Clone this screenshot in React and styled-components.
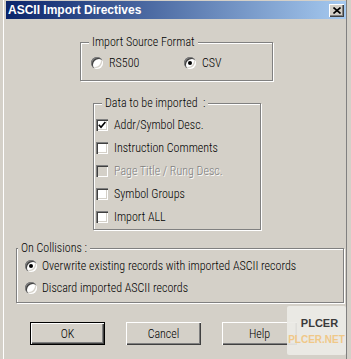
import React from "react";
import styled, { createGlobalStyle } from "styled-components";

const Global = createGlobalStyle`
  html, body { margin: 0; padding: 0; background: #d4d0c8; }
  body { font-family: "Roboto Condensed", "Liberation Sans", sans-serif; font-size: 12px; font-weight: 300; color: #000; }
`;

const Window = styled.div`
  position: relative;
  box-sizing: border-box;
  width: 351px;
  height: 359px;
  padding: 1px 5px 0 6px;
  background: #d4d0c8;
  box-shadow: inset 3px 0 0 #d4d0c8, inset 4px 0 0 #ffffff, inset -4px 0 0 #d4d0c8, inset -5px 0 0 #808080;
  overflow: hidden;
`;

const TitleBar = styled.div`
  display: flex;
  align-items: center;
  justify-content: space-between;
  height: 18px;
  padding: 0 2px 0 2px;
  background: linear-gradient(to right, #0a246a, #a6caf0);
`;

const TitleText = styled.span`
  font-family: "Liberation Sans", Arial, sans-serif;
  font-weight: bold;
  font-size: 12px;
  color: #fff;
  white-space: nowrap;
`;

const CloseButton = styled.div`
  box-sizing: border-box;
  width: 15px;
  height: 13px;
  display: flex;
  align-items: center;
  justify-content: center;
  background: #d4d0c8;
  box-shadow: inset 1px 1px 0 #ffffff, inset -1px -1px 0 #404040, inset -2px -2px 0 #808080;
`;

const Content = styled.div`
  display: flex;
  flex-direction: column;
`;

const Group = styled.fieldset`
  box-sizing: border-box;
  margin: ${p => p.$top}px 0 0 ${p => p.$left}px;
  padding: 0;
  min-width: 0;
  width: ${p => p.$w}px;
  height: ${p => p.$h}px;
  border: 1px solid #808080;
  box-shadow: inset 1px 1px 0 #ffffff, 1px 1px 0 #ffffff;
`;

const Legend = styled.legend`
  margin-left: ${p => p.$m}px;
  padding: 0 3px;
  line-height: 13px;
  height: 13px;
  background: #d4d0c8;
  white-space: nowrap;
`;

const GroupBody = styled.div`
  display: flex;
  flex-direction: ${p => (p.$row ? "row" : "column")};
  padding: ${p => p.$pt}px 0 0 ${p => p.$pl}px;
`;

const Option = styled.div`
  display: flex;
  align-items: center;
  height: ${p => p.$h}px;
  width: ${p => (p.$w ? `${p.$w}px` : "auto")};
  white-space: nowrap;
`;

const Label = styled.span`
  color: ${p => (p.$disabled ? "#808080" : "#000")};
  text-shadow: ${p => (p.$disabled ? "1px 1px 0 #ffffff" : "none")};
`;

const RadioCircle = styled.span`
  position: relative;
  flex: none;
  box-sizing: border-box;
  width: 12px;
  height: 12px;
  margin-right: ${p => p.$gap}px;
  border-radius: 50%;
  background: #fff;
  box-shadow: inset 1px 1px 0 #808080, inset 2px 2px 0 #404040, inset -1px -1px 0 #ffffff, inset -2px -2px 0 #d4d0c8;
  &::after {
    content: "";
    display: ${p => (p.$checked ? "block" : "none")};
    position: absolute;
    left: 4px;
    top: 4px;
    width: 4px;
    height: 4px;
    border-radius: 50%;
    background: #000;
  }
`;

const CheckBox = styled.span`
  flex: none;
  box-sizing: border-box;
  width: 12px;
  height: 12px;
  margin-right: 6px;
  display: flex;
  align-items: center;
  justify-content: center;
  background: ${p => (p.$disabled ? "#d4d0c8" : "#fff")};
  box-shadow: inset 1px 1px 0 #808080, inset 2px 2px 0 #404040, inset -1px -1px 0 #ffffff, inset -2px -2px 0 #d4d0c8;
`;

const ButtonRow = styled.div`
  display: flex;
  gap: 21px;
  margin: 19px 0 0 24px;
`;

const Button = styled.div`
  box-sizing: border-box;
  width: 75px;
  height: 23px;
  display: flex;
  align-items: center;
  justify-content: center;
  background: #d4d0c8;
  border: ${p => (p.$default ? "1px solid #000" : "none")};
  box-shadow: inset 1px 1px 0 #ffffff, inset -1px -1px 0 #404040, inset -2px -2px 0 #808080;
`;

const Watermark = styled.div`
  position: absolute;
  left: 287px;
  top: 306px;
  width: 59px;
  height: 49px;
  background: rgba(236, 234, 230, 0.92);
  border-radius: 2px;
  display: flex;
  flex-direction: column;
  align-items: center;
  justify-content: center;
  gap: 5px;
  font-family: "Liberation Sans", Arial, sans-serif;
  font-weight: bold;
`;

const MarkTop = styled.span`
  font-size: 11px;
  color: #3a3a3a;
  padding-left: 6px;
`;

const MarkBottom = styled.span`
  font-size: 10px;
  color: #f0c888;
`;

const Radio = ({ checked, gap = 6, w, h = 14, children }) => (
  <Option $w={w} $h={h}>
    <RadioCircle $checked={checked} $gap={gap} />
    <Label>{children}</Label>
  </Option>
);

const Check = ({ checked, disabled, children }) => (
  <Option $h={23}>
    <CheckBox $disabled={disabled}>
      {checked && (
        <svg width="8" height="8" viewBox="0 0 8 8">
          <path d="M0.8 3.8 L3 6.2 L7.4 1" fill="none" stroke="#000" strokeWidth="1.7" />
        </svg>
      )}
    </CheckBox>
    <Label $disabled={disabled}>{children}</Label>
  </Option>
);

export default function App() {
  return (
    <>
      <Global />
      <Window>
        <TitleBar>
          <TitleText>ASCII Import Directives</TitleText>
          <CloseButton>
            <svg width="8" height="7" viewBox="0 0 8 7">
              <path d="M0.5 0.5 L7.5 6.5 M7.5 0.5 L0.5 6.5" stroke="#000" strokeWidth="1.6" />
            </svg>
          </CloseButton>
        </TitleBar>
        <Content>
          <Group $top={17} $left={74} $w={193} $h={45}>
            <Legend $m={8}>Import Source Format</Legend>
            <GroupBody $row $pt={7} $pl={10}>
              <Radio w={93}>RS500</Radio>
              <Radio checked>CSV</Radio>
            </GroupBody>
          </Group>
          <Group $top={16} $left={87} $w={168} $h={133}>
            <Legend $m={8}>Data to be imported&nbsp; :</Legend>
            <GroupBody $pt={3} $pl={2}>
              <Check checked>Addr/Symbol Desc.</Check>
              <Check>Instruction Comments</Check>
              <Check disabled>Page Title / Rung Desc.</Check>
              <Check>Symbol Groups</Check>
              <Check>Import ALL</Check>
            </GroupBody>
          </Group>
          <Group $top={12} $left={10} $w={328} $h={61}>
            <Legend $m={1}>On Collisions :</Legend>
            <GroupBody $pt={0} $pl={8}>
              <Radio checked gap={5} h={22}>Overwrite existing records with imported ASCII records</Radio>
              <Radio gap={5} h={22}>Discard imported ASCII records</Radio>
            </GroupBody>
          </Group>
          <ButtonRow>
            <Button $default>OK</Button>
            <Button>Cancel</Button>
            <Button>Help</Button>
          </ButtonRow>
        </Content>
        <Watermark>
          <MarkTop>PLCER</MarkTop>
          <MarkBottom>PLCER.NET</MarkBottom>
        </Watermark>
      </Window>
    </>
  );
}
